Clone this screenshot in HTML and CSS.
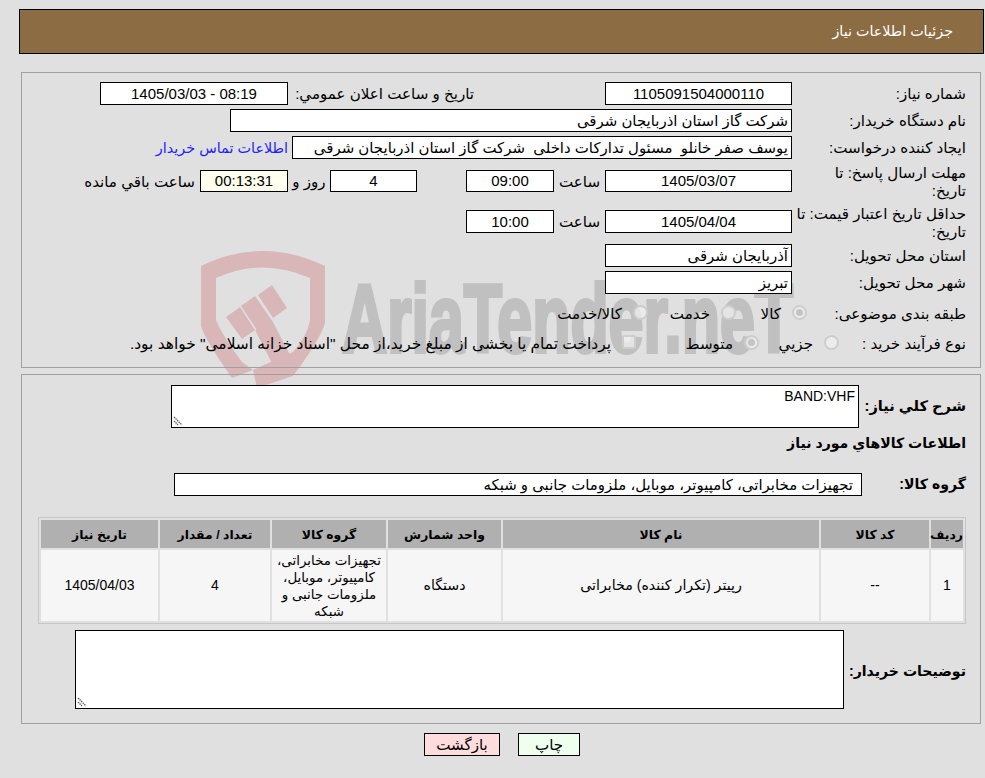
FILE: index.html
```html
<!DOCTYPE html>
<html lang="fa" dir="rtl">
<head>
<meta charset="utf-8">
<title>جزئیات اطلاعات نیاز</title>
<link rel="stylesheet" href="styles.css">
</head>
<body>
<svg class="watermark" width="985" height="778" viewBox="0 0 985 778" aria-hidden="true">
  <path class="wm-red" fill-rule="evenodd" d="M201 266 Q262 236 325 266 L325 323 Q320 340 293 376 L257 388 L253 370 L232 378 Q205 340 201 326 Z M216 278 L216 320 Q222 335 242 362 L253 370 L293 352 Q308 335 310 320 L310 278 Q262 257 216 278 Z"/>
  <path class="wm-red" d="M226 317 L240 307 L255 330 L242 339 Z M241 306 L255 296 L273 322 L259 333 Z M258 295 L272 285 L287 308 L273 318 Z M255 330 L273 322 L295 365 L278 375 Z"/>
  <text class="wm-text" x="342" y="352" textLength="451" lengthAdjust="spacingAndGlyphs">AriaTender.neT</text>
</svg>
<div class="page">
  <header class="title-bar">جزئیات اطلاعات نیاز</header>

  <section class="panel panel-info">
    <div class="row r1">
      <div class="label">شماره نیاز:</div>
      <div class="field f-date center num">1105091504000110</div>
      <div class="label mid-label">تاریخ و ساعت اعلان عمومي:</div>
      <div class="field f-date f-wide center num">1405/03/03 - 08:19</div>
    </div>
    <div class="row r2">
      <div class="label">نام دستگاه خریدار:</div>
      <div class="field f-buyer">شرکت گاز استان اذربایجان شرقی</div>
    </div>
    <div class="row r3">
      <div class="label">ایجاد کننده درخواست:</div>
      <div class="field f-creator">یوسف صفر خانلو&nbsp; مسئول تدارکات داخلی&nbsp; شرکت گاز استان اذربایجان شرقی</div>
      <a class="contact" href="#">اطلاعات تماس خریدار</a>
    </div>
    <div class="row r4">
      <div class="label two-line">مهلت ارسال پاسخ: تا<br>تاریخ:</div>
      <div class="field f-date center num">1405/03/07</div>
      <div class="hour-label">ساعت</div>
      <div class="field f-time center num">09:00</div>
      <div class="field f-days center num">4</div>
      <div class="days-label">روز و</div>
      <div class="field f-remain center num">00:13:31</div>
      <div class="remain-label">ساعت باقي مانده</div>
    </div>
    <div class="row r5">
      <div class="label two-line">حداقل تاریخ اعتبار قیمت: تا<br>تاریخ:</div>
      <div class="field f-date center num">1405/04/04</div>
      <div class="hour-label">ساعت</div>
      <div class="field f-time center num">10:00</div>
    </div>
    <div class="row r6">
      <div class="label">استان محل تحویل:</div>
      <div class="field f-date">آذربایجان شرقی</div>
    </div>
    <div class="row r7">
      <div class="label">شهر محل تحویل:</div>
      <div class="field f-date">تبریز</div>
    </div>
    <div class="row r8">
      <div class="label label-r8">طبقه بندی موضوعی:</div>
      <div class="options">
        <span class="opt opt-a"><i class="radio checked"></i><span>کالا</span></span>
        <span class="opt opt-b"><i class="radio"></i><span>خدمت</span></span>
        <span class="opt"><i class="radio"></i><span>کالا/خدمت</span></span>
      </div>
    </div>
    <div class="row r9">
      <div class="label label-r9">نوع فرآیند خرید :</div>
      <div class="options">
        <span class="opt opt-c"><i class="radio"></i><span>جزيي</span></span>
        <span class="opt opt-d"><i class="radio checked"></i><span>متوسط</span></span>
        <span class="opt"><i class="check"></i><span class="opt-long">پرداخت تمام یا بخشی از مبلغ خرید،از محل "اسناد خزانه اسلامی" خواهد بود.</span></span>
      </div>
    </div>
  </section>

  <section class="panel panel-goods">
    <div class="row desc-row">
      <div class="big-label">شرح کلي نیاز:</div>
      <div class="area area-desc" dir="ltr"><span class="area-text">BAND:VHF</span><svg class="grip" width="10" height="10" viewBox="0 0 10 10"><path d="M1 1 L9 9 M1 5 L5 9" stroke="#666" stroke-width="1.4" stroke-dasharray="1.5 .7" fill="none"/></svg></div>
    </div>
    <div class="section-title">اطلاعات کالاهاي مورد نیاز</div>
    <div class="row group-row">
      <div class="big-label group-label">گروه کالا:</div>
      <div class="field f-group">تجهیزات مخابراتی، کامپیوتر، موبایل، ملزومات جانبی و شبکه</div>
    </div>
    <table class="goods">
      <colgroup>
        <col class="c1"><col class="c2"><col class="c3"><col class="c4"><col class="c5"><col class="c6"><col class="c7">
      </colgroup>
      <thead>
        <tr><th>ردیف</th><th>کد کالا</th><th>نام کالا</th><th>واحد شمارش</th><th>گروه کالا</th><th>تعداد / مقدار</th><th>تاریخ نیاز</th></tr>
      </thead>
      <tbody>
        <tr>
          <td>1</td><td>--</td><td class="td-text">رپیتر (تکرار کننده) مخابراتی</td><td class="td-text">دستگاه</td>
          <td class="td-group">تجهیزات مخابراتی، کامپیوتر، موبایل، ملزومات جانبی و شبکه</td><td>4</td><td>1405/04/03</td>
        </tr>
      </tbody>
    </table>
    <div class="row notes-row">
      <div class="big-label notes-label">توضیحات خریدار:</div>
      <div class="area area-notes"><svg class="grip" width="10" height="10" viewBox="0 0 10 10"><path d="M1 1 L9 9 M1 5 L5 9" stroke="#666" stroke-width="1.4" stroke-dasharray="1.5 .7" fill="none"/></svg></div>
    </div>
  </section>

  <div class="buttons">
    <button class="btn btn-print" type="button">چاپ</button>
    <button class="btn btn-back" type="button">بازگشت</button>
  </div>
</div>
</body>
</html>
```

FILE: styles.css
```css
html, body { margin: 0; padding: 0; }
body {
  width: 985px;
  height: 778px;
  overflow: hidden;
  background: #e0e0e0;
  color: #000;
  font-family: "Liberation Sans", "DejaVu Sans", sans-serif;
  font-size: 15.1px;
  position: relative;
}
.watermark { position: absolute; left: 0; top: 0; }
.wm-red { fill: #d9b7b9; }
.wm-text {
  fill: #c0c0c0;
  stroke: #c0c0c0;
  stroke-width: 4px;
  font-family: "Liberation Sans", sans-serif;
  font-weight: 700;
  font-size: 96px;
  direction: ltr;
}
.page { position: relative; box-sizing: border-box; width: 985px; padding: 9px 1px 0 0; }
.title-bar {
  box-sizing: border-box;
  margin-left: 19px;
  height: 45px;
  background: #8c6c42;
  border: 1px solid #000;
  color: #fff;
  font-size: 14.3px;
  line-height: 43px;
  padding-right: 30px;
}
.panel { box-sizing: border-box; border: 1px solid #a0a0a0; }
.panel-info { margin: 18px 3px 0 21px; height: 296px; padding: 9px 14px 0 0; }
.panel-goods { margin: 6px 3px 0 21px; height: 350px; padding: 10px 14px 0 0; }
.row { display: flex; align-items: flex-start; }
.label { width: 174px; flex: none; line-height: 20px; padding-top: 2px; }
.two-line { line-height: 18px; margin-top: -6px; padding-top: 0; }
.field {
  box-sizing: border-box;
  height: 23px;
  border: 1px solid #000;
  background: #fff;
  font-size: 14.95px;
  line-height: 21px;
  padding: 0 3px;
  flex: none;
  white-space: nowrap;
  overflow: hidden;
}
.center { text-align: center; }
.num { direction: ltr; font-size: 15px; }
.f-date { width: 187px; }
.f-wide { width: 188px; }
.f-buyer { width: 562px; }
.f-creator { width: 500px; }
.f-time { width: 88px; }
.f-days { width: 87px; margin-right: 49px; }
.f-remain { width: 88px; background: #ffffee; }
.f-group { width: 688px; padding-right: 8px; }
.mid-label { width: 317px; padding-right: 131px; box-sizing: border-box; }
.r1, .r2, .r3, .r5, .r6, .r7 { height: 23px; }
.r2, .r3 { margin-top: 4px; }
.r4 { margin-top: 11px; height: 22px; }
.r4 .field { height: 22px; line-height: 20px; }
.r5 { margin-top: 18px; }
.r5 .two-line { margin-top: -5px; }
.r6 { margin-top: 11px; }
.r7 { margin-top: 4px; }
.r8, .r9 { margin-top: 10px; height: 20px; }
.label-r8 { width: 159px; padding-top: 0; }
.label-r9 { width: 127px; padding-top: 0; }
.contact { color: #1f1fff; text-decoration: none; margin-right: 4px; line-height: 24px; font-size: 14.4px; }
.hour-label { width: 51px; text-align: center; flex: none; line-height: 24px; }
.days-label { width: 42px; flex: none; text-align: center; line-height: 24px; }
.remain-label { margin-right: 5px; line-height: 24px; white-space: nowrap; }
.options { display: flex; align-items: center; height: 20px; }
.opt { display: flex; align-items: center; gap: 11px; white-space: nowrap; }
.opt-a { width: 71px; }
.opt-b { width: 88px; }
.opt-c { width: 80px; }
.opt-d { width: 123px; }
.opt-long { font-size: 15.45px; }
.radio {
  box-sizing: border-box;
  width: 15px;
  height: 15px;
  margin-top: -4px;
  border-radius: 50%;
  border: 2px solid #cdcdcd;
  background: rgba(240, 240, 240, 0.75);
  flex: none;
  position: relative;
}
.radio.checked::after {
  content: "";
  position: absolute;
  left: 2px; top: 2px;
  width: 7px; height: 7px;
  border-radius: 50%;
  background: #c4c4c4;
}
.check {
  box-sizing: border-box;
  width: 14px;
  height: 14px;
  margin-top: -4px;
  border-radius: 2px;
  border: 2px solid #cdcdcd;
  background: rgba(240, 240, 240, 0.75);
  flex: none;
}
.big-label { width: 174px; flex: none; font-weight: 700; font-size: 14.1px; }
.desc-row .big-label { width: 107px; padding-top: 12px; box-sizing: border-box; font-size: 14.6px; }
.area {
  box-sizing: border-box;
  border: 1px solid #000;
  background: #fff;
  position: relative;
  flex: none;
}
.area-desc { width: 688px; height: 43px; padding: 2px 3px; text-align: right; font-size: 14px; }
.area-notes { width: 769px; height: 79px; }
.grip { position: absolute; left: 1px; bottom: 1px; }
.section-title { font-weight: 700; font-size: 14.1px; line-height: 20px; margin-top: 5px; height: 20px; }
.group-row { margin-top: 20px; }
.group-label { width: 104px; line-height: 22px; }
.goods {
  margin: 21px 0 0 0;
  width: 928px;
  table-layout: fixed;
  border-collapse: separate;
  border-spacing: 2px;
  border: 1px solid #c6c6c6;
  box-sizing: border-box;
  font-size: 14px;
}
.goods th { background: #b0b0b0; height: 28px; padding: 0; font-size: 12.4px; font-weight: 700; }
.goods td { background: #f6f6f6; height: 71px; padding: 0 3px; text-align: center; line-height: 17px; }
.goods .td-text { font-size: 14.2px; }
.goods .td-group { font-size: 13.4px; }
.c1 { width: 32px; } .c2 { width: 108px; } .c3 { width: 316px; } .c4 { width: 113px; }
.c5 { width: 114px; } .c6 { width: 110px; } .c7 { width: 117px; }
.notes-row { margin-top: 6px; }
.notes-label { width: 122px; padding-top: 33px; box-sizing: border-box; }
.buttons { display: flex; justify-content: center; gap: 18px; margin-top: 9px; padding-left: 20px; direction: ltr; flex-direction: row-reverse; }
.btn {
  box-sizing: border-box;
  height: 23px;
  border: 1px solid #000;
  font: inherit;
  padding: 0;
  color: #000;
}
.btn-print { width: 62px; background: #eeffee; }
.btn-back { width: 76px; background: #ffdddd; }
```
